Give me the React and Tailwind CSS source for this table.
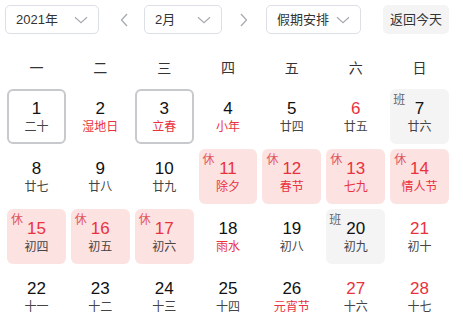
import React from "react";

const F = { fontFamily: '"Liberation Sans", "Noto Sans CJK SC", sans-serif' };

function Chevron({ className = "" }) {
  return (
    <svg width="14" height="8" viewBox="0 0 14 8" className={className}>
      <path d="M1 1.2 L7 6.8 L13 1.2" fill="none" stroke="#a8abb2" strokeWidth="1.2" />
    </svg>
  );
}

function Select({ label, w }) {
  return (
    <div
      className={`h-[29px] ${w} border border-[#dcdfe6] rounded-[5px] flex items-center justify-between pl-[10px] pr-[10px] text-[13px] text-[#333]`}
    >
      <span>{label}</span>
      <Chevron />
    </div>
  );
}

const days = [
  { d: 1, l: "二十", sel: true },
  { d: 2, l: "湿地日", lr: true },
  { d: 3, l: "立春", lr: true, sel: true },
  { d: 4, l: "小年", lr: true },
  { d: 5, l: "廿四" },
  { d: 6, l: "廿五", nr: true },
  { d: 7, l: "廿六", work: true },
  { d: 8, l: "廿七" },
  { d: 9, l: "廿八" },
  { d: 10, l: "廿九" },
  { d: 11, l: "除夕", rest: true },
  { d: 12, l: "春节", rest: true },
  { d: 13, l: "七九", rest: true },
  { d: 14, l: "情人节", rest: true },
  { d: 15, l: "初四", rest: true, lg: true },
  { d: 16, l: "初五", rest: true, lg: true },
  { d: 17, l: "初六", rest: true, lg: true },
  { d: 18, l: "雨水", lr: true },
  { d: 19, l: "初八" },
  { d: 20, l: "初九", work: true },
  { d: 21, l: "初十", nr: true },
  { d: 22, l: "十一" },
  { d: 23, l: "十二" },
  { d: 24, l: "十三" },
  { d: 25, l: "十四" },
  { d: 26, l: "元宵节", lr: true },
  { d: 27, l: "十六", nr: true },
  { d: 28, l: "十七", nr: true },
];

function Cell({ c }) {
  let box = "h-[55px] rounded-[6px] relative flex flex-col items-center justify-center";
  if (c.sel) box += " border-2 border-[#c8c9cc]";
  if (c.rest) box += " bg-[#fde2e2]";
  if (c.work) box += " bg-[#f4f4f5]";
  const numColor = c.rest || c.nr ? "text-[#e8333e]" : "text-[#111]";
  let lunarColor = "text-[#444]";
  if (c.lr || (c.rest && !c.lg)) lunarColor = "text-[#e8333e]";
  return (
    <div className={box}>
      {c.rest && (
        <span className="absolute left-[4px] top-[3px] text-[12px] leading-[16px] text-[#e0555e]">休</span>
      )}
      {c.work && (
        <span className="absolute left-[3px] top-[3px] text-[12px] leading-[16px] text-[#666]">班</span>
      )}
      <span className={`text-[17px] leading-[20px] ${numColor}`}>{c.d}</span>
      <span className={`text-[12px] leading-[16px] ${lunarColor}`}>{c.l}</span>
    </div>
  );
}

export default function App() {
  const weeks = ["一", "二", "三", "四", "五", "六", "日"];
  return (
    <div className="w-[463px] h-[326px] bg-white overflow-hidden pt-[5px]" style={F}>
      <div className="flex items-center pl-[5px]">
        <Select label="2021年" w="w-[94px]" />
        <div className="w-[45px] flex justify-center pl-[4px]">
          <svg width="8" height="14" viewBox="0 0 8 14">
            <path d="M7 1 L1.5 7 L7 13" fill="none" stroke="#a8abb2" strokeWidth="1.3" />
          </svg>
        </div>
        <Select label="2月" w="w-[78px]" />
        <div className="w-[44px] flex justify-center">
          <svg width="8" height="14" viewBox="0 0 8 14">
            <path d="M1 1 L6.5 7 L1 13" fill="none" stroke="#a8abb2" strokeWidth="1.3" />
          </svg>
        </div>
        <Select label="假期安排" w="w-[95px]" />
        <div className="ml-[22px] h-[29px] w-[66px] rounded-[5px] bg-[#f4f4f5] flex items-center justify-center text-[13px] text-[#333]">
          返回今天
        </div>
      </div>
      <div className="ml-[7px] w-[442px] grid grid-cols-7 gap-x-[5px] mt-[19px] h-[30px] items-center">
        {weeks.map((w) => (
          <div key={w} className="text-center text-[14px] text-[#333]">
            {w}
          </div>
        ))}
      </div>
      <div className="ml-[7px] w-[442px] grid grid-cols-7 gap-x-[5px] gap-y-[5px] mt-[6px]">
        {days.map((c) => (
          <Cell key={c.d} c={c} />
        ))}
      </div>
    </div>
  );
}
